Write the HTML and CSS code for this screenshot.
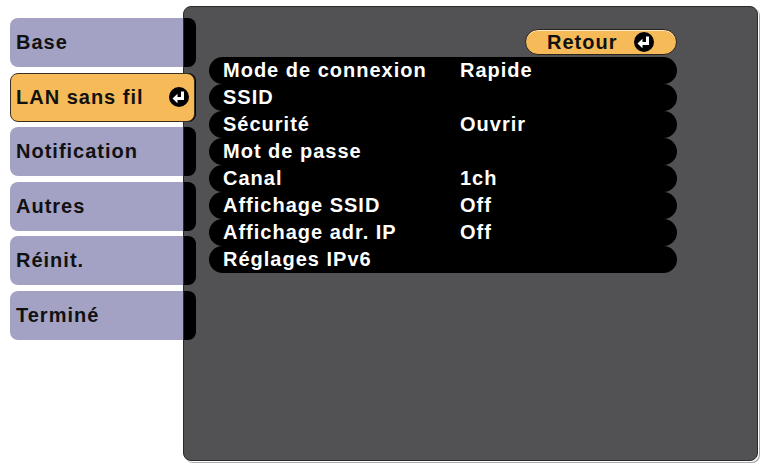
FILE: index.html
```html
<!DOCTYPE html>
<html lang="fr">
<head>
<meta charset="utf-8">
<title>LAN sans fil</title>
<link rel="stylesheet" href="styles.css">
</head>
<body>
<div class="screen">
  <nav class="tabs">
    <div class="tab">Base</div>
    <div class="tab active"><span>LAN sans fil</span>
      <svg class="enter" viewBox="0 0 20 20" width="20" height="20"><circle cx="10" cy="10" r="10" fill="#000"/><path d="M13.5 4.5 V11.5 H8" fill="none" stroke="#fff" stroke-width="3"/><polygon points="3.5,11.5 8.5,6.8 8.5,16.2" fill="#fff"/></svg>
    </div>
    <div class="tab">Notification</div>
    <div class="tab">Autres</div>
    <div class="tab">Réinit.</div>
    <div class="tab">Terminé</div>
  </nav>
  <section class="panel">
    <div class="strips">
      <div class="strip"></div>
      <div class="strip"></div>
      <div class="strip"></div>
      <div class="strip"></div>
      <div class="strip"></div>
      <div class="strip"></div>
    </div>
    <div class="content">
      <div class="toolbar">
        <div class="back"><span>Retour</span>
          <svg class="enter" viewBox="0 0 20 20" width="20" height="20"><circle cx="10" cy="10" r="10" fill="#000"/><path d="M13.5 4.5 V11.5 H8" fill="none" stroke="#fff" stroke-width="3"/><polygon points="3.5,11.5 8.5,6.8 8.5,16.2" fill="#fff"/></svg>
        </div>
      </div>
      <div class="rows">
        <div class="row"><span class="label">Mode de connexion</span><span class="value">Rapide</span></div>
        <div class="row"><span class="label">SSID</span><span class="value"></span></div>
        <div class="row"><span class="label">Sécurité</span><span class="value">Ouvrir</span></div>
        <div class="row"><span class="label">Mot de passe</span><span class="value"></span></div>
        <div class="row"><span class="label">Canal</span><span class="value">1ch</span></div>
        <div class="row"><span class="label">Affichage SSID</span><span class="value">Off</span></div>
        <div class="row"><span class="label">Affichage adr. IP</span><span class="value">Off</span></div>
        <div class="row"><span class="label">Réglages IPv6</span><span class="value"></span></div>
      </div>
    </div>
  </section>
</div>
</body>
</html>
```
FILE: styles.css
```css
html, body {
  margin: 0;
  padding: 0;
  background: #ffffff;
}
body {
  font-family: "Liberation Sans", Arial, sans-serif;
  font-weight: bold;
  font-size: 20px;
  letter-spacing: 1px;
}
.screen {
  display: flex;
  height: 467px;
  width: 762px;
}
.tabs {
  display: flex;
  flex-direction: column;
  gap: 5.6px;
  padding-top: 18px;
  padding-left: 10px;
  width: 173px;
  flex: none;
}
.tab {
  height: 49px;
  box-sizing: border-box;
  background: #a3a2c4;
  color: #111;
  border-radius: 8px 0 0 8px;
  display: flex;
  align-items: center;
  padding-left: 6px;
}
.tab.active {
  background: #f6ba58;
  border: 1px solid #3a3020;
  border-radius: 8px;
  padding-left: 5px;
  padding-right: 5px;
  margin-right: -12px;
  justify-content: space-between;
  position: relative;
  z-index: 1;
}
.enter {
  display: block;
  flex: none;
}
.panel {
  margin-top: 6px;
  width: 575px;
  height: 455px;
  box-sizing: border-box;
  background: #525254;
  border: 1px solid #2a2a2c;
  border-radius: 8px;
  box-shadow: 1px 1px 0 #ffffff, 2px 2px 0 #a8a8a8;
  display: flex;
  flex: none;
}
.strips {
  display: flex;
  flex-direction: column;
  gap: 5.6px;
  padding-top: 11px;
  width: 12px;
  flex: none;
}
.strip {
  height: 49px;
  background: #000;
  border-radius: 0 8px 8px 0;
}
.content {
  flex: 1;
  display: flex;
  flex-direction: column;
  padding-top: 22px;
  padding-left: 13px;
  padding-right: 80px;
}
.toolbar {
  display: flex;
  justify-content: flex-end;
}
.back {
  width: 152px;
  height: 26px;
  box-sizing: border-box;
  background: #f6ba58;
  border: 1px solid #2a2418;
  border-radius: 13px;
  box-shadow: inset 0 1px 0 rgba(255,255,255,0.7);
  display: flex;
  align-items: center;
  padding-left: 21px;
  gap: 17px;
  color: #111;
}
.rows {
  margin-top: 2px;
  display: flex;
  flex-direction: column;
}
.row {
  height: 27px;
  background: #000;
  color: #fff;
  border-radius: 13.5px;
  display: flex;
  align-items: center;
  padding-left: 14px;
}
.label {
  width: 237px;
  flex: none;
  white-space: nowrap;
}
.value {
  white-space: nowrap;
}
```
